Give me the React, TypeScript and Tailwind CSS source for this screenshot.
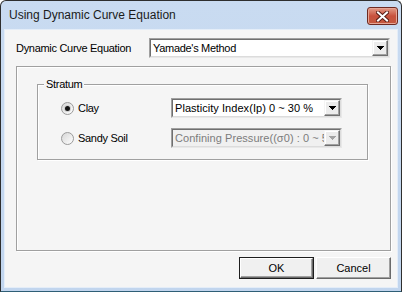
const font = "font-['Liberation_Sans',Arial,sans-serif]";

function Arrow({ disabled }: { disabled?: boolean }) {
  return (
    <svg width="7" height="4" viewBox="0 0 7 4" shapeRendering="crispEdges">
      <path d="M0 0H7V1H6V2H5V3H4V4H3V3H2V2H1V1H0Z" fill={disabled ? "#a3a3a3" : "#000"} />
    </svg>
  );
}

function Combo({
  text,
  disabled,
  width,
  tight,
}: {
  text: string;
  disabled?: boolean;
  width: string;
  tight?: boolean;
}) {
  return (
    <div className={`h-[20px] ${width} border border-t-[#a0a0a0] border-l-[#a0a0a0] border-r-[#e8e8e8] border-b-[#e8e8e8]`}>
      <div
        className={`flex h-full items-stretch border border-t-[#6f6f6f] border-l-[#6f6f6f] border-r-[#dcdcdc] border-b-[#dcdcdc] ${
          disabled ? "bg-[#f0f0f0]" : "bg-white"
        }`}
      >
        <div
          className={`flex-1 overflow-hidden whitespace-nowrap pl-[2px] text-[11px] leading-[16px] ${
            tight ? "tracking-[-0.3px]" : "tracking-[0.05px]"
          } ${disabled ? "text-[#7c7c7c]" : "text-black"}`}
        >
          {text}
        </div>
        <div className="flex w-[16px] items-center justify-center border border-t-[#f4f4f4] border-l-[#f4f4f4] border-r-[#6f6f6f] border-b-[#6f6f6f] bg-[#ececec] shadow-[inset_-1px_-1px_0_#a0a0a0,inset_1px_1px_0_#ffffff]">
          <Arrow disabled={disabled} />
        </div>
      </div>
    </div>
  );
}

function Radio({ checked }: { checked?: boolean }) {
  return (
    <span className="flex h-[13px] w-[13px] items-center justify-center rounded-full border border-[#9a9a9a] bg-gradient-to-br from-[#d6d6d6] to-white">
      {checked && <span className="h-[5px] w-[5px] rounded-full bg-[#141414] shadow-[0_0_0_1px_#cfcfcf]" />}
    </span>
  );
}

function Button({ label, isDefault }: { label: string; isDefault?: boolean }) {
  return (
    <div className={`h-[22px] w-[75px] ${isDefault ? "border border-[#1e1e1e]" : ""}`}>
      <div className="flex h-full items-center justify-center border border-t-white border-l-white border-r-[#6a6a6a] border-b-[#6a6a6a] bg-[#f0f0f0] text-[11px] text-black shadow-[inset_-1px_-1px_0_#a0a0a0]">
        {label}
      </div>
    </div>
  );
}

export default function App() {
  return (
    <div className={`${font} h-[295px] w-[406px] bg-white`}>
      <div className="flex h-[292px] w-[402px] flex-col rounded-t-[6px] border border-[#2e2e2e] border-b-[#2f5f76] bg-gradient-to-b from-[#c9dbf1] to-[#c1d5ee]">
        <div className="flex h-[29px] items-start justify-between">
          <span className="pl-[8px] pt-[7px] text-[12px] leading-[15px] text-[#1b1b1b]">
            Using Dynamic Curve Equation
          </span>
          <div className="mr-[3px] mt-[6px] flex h-[18px] w-[31px] items-center justify-center rounded-[3px] border border-[#6e2a22] bg-gradient-to-b from-[#e19a87] via-[#c8513d] to-[#c4583f] shadow-[inset_0_0_0_1px_#e6a595]">
            <svg width="13" height="11" viewBox="0 0 13 11">
              <path d="M2 1.5L11 9.5M11 1.5L2 9.5" stroke="#5a1e17" strokeWidth="4" strokeLinecap="square" />
              <path d="M2 1.5L11 9.5M11 1.5L2 9.5" stroke="#ffffff" strokeWidth="2" strokeLinecap="square" />
            </svg>
          </div>
        </div>
        <div className="mx-[4px] mb-[4px] flex flex-1 flex-col bg-[#f5f5f5] pl-[11px] pr-[6px] pt-[8px] text-[11px] text-black shadow-[0_0_0_1px_#e4edf8]">
          <div className="flex items-center">
            <div className="w-[133px] tracking-[-0.3px]">Dynamic Curve Equation</div>
            <Combo text="Yamade's Method" width="w-[241px]" tight />
          </div>
          <div className="mt-[8px] h-[185px] w-[375px] border border-[#a0a0a0] shadow-[1px_1px_0_#ffffff,inset_1px_1px_0_#ffffff]">
            <div className="relative ml-[20px] mt-[17px] h-[76px] w-[331px] border border-[#a0a0a0] shadow-[1px_1px_0_#ffffff,inset_1px_1px_0_#ffffff]">
              <span className="absolute -top-[7px] left-[6px] bg-[#f5f5f5] px-[2px] leading-[13px] tracking-[-0.3px]">
                Stratum
              </span>
              <div className="flex flex-col gap-[10px] pl-[23px] pt-[13px]">
                <div className="flex items-center">
                  <div className="flex w-[110px] items-center gap-[4px]">
                    <Radio checked />
                    <span className="tracking-[-0.3px]">Clay</span>
                  </div>
                  <Combo text="Plasticity Index(Ip) 0 ~ 30 %" width="w-[171px]" />
                </div>
                <div className="flex items-center">
                  <div className="flex w-[110px] items-center gap-[4px]">
                    <Radio />
                    <span className="tracking-[-0.3px]">Sandy Soil</span>
                  </div>
                  <Combo text="Confining Pressure((σ0) : 0 ~ 50 kPa)" width="w-[171px]" disabled />
                </div>
              </div>
            </div>
          </div>
          <div className="mt-[6px] flex justify-end gap-[2px]">
            <Button label="OK" isDefault />
            <Button label="Cancel" />
          </div>
        </div>
      </div>
    </div>
  );
}
